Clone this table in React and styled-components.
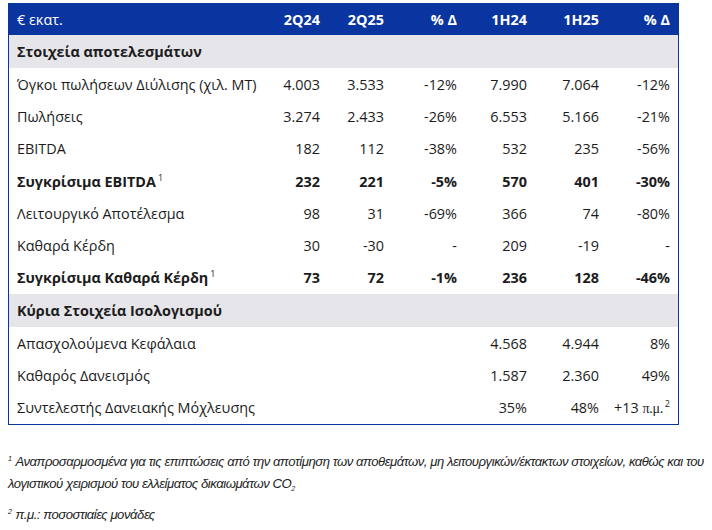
import React from 'react'
import styled, { createGlobalStyle } from 'styled-components'

const GlobalStyle = createGlobalStyle`
  body {
    margin: 0;
    background: #ffffff;
    font-family: "Open Sans", "Noto Sans", sans-serif;
    color: #1c1c1c;
  }
`

const header = ['€ εκατ.', '2Q24', '2Q25', '% Δ', '1H24', '1H25', '% Δ']

const rows = [
  { section: 'Στοιχεία αποτελεσμάτων' },
  { label: 'Όγκοι πωλήσεων Διύλισης (χιλ. ΜΤ)', values: ['4.003', '3.533', '-12%', '7.990', '7.064', '-12%'] },
  { label: 'Πωλήσεις', values: ['3.274', '2.433', '-26%', '6.553', '5.166', '-21%'] },
  { label: 'EBITDA', values: ['182', '112', '-38%', '532', '235', '-56%'] },
  { label: 'Συγκρίσιμα EBITDA', note: '1', bold: true, values: ['232', '221', '-5%', '570', '401', '-30%'] },
  { label: 'Λειτουργικό Αποτέλεσμα', values: ['98', '31', '-69%', '366', '74', '-80%'] },
  { label: 'Καθαρά Κέρδη', values: ['30', '-30', '-', '209', '-19', '-'] },
  { label: 'Συγκρίσιμα Καθαρά Κέρδη', note: '1', bold: true, values: ['73', '72', '-1%', '236', '128', '-46%'] },
  { section: 'Κύρια Στοιχεία Ισολογισμού' },
  { label: 'Απασχολούμενα Κεφάλαια', values: ['', '', '', '4.568', '4.944', '8%'] },
  { label: 'Καθαρός Δανεισμός', values: ['', '', '', '1.587', '2.360', '49%'] },
  { label: 'Συντελεστής Δανειακής Μόχλευσης', values: ['', '', '', '35%', '48%', 'pm'] },
]

function App() {
  return (
    <Page>
      <GlobalStyle />
      <Table>
        <HeadRow>
          {header.map((h, i) => (
            <HeadCell key={i} $left={i === 0}>{h}</HeadCell>
          ))}
        </HeadRow>
        {rows.map((r, i) =>
          r.section ? (
            <SectionRow key={i}>{r.section}</SectionRow>
          ) : (
            <Row key={i} $bold={r.bold}>
              <Label>
                {r.label}
                {r.note && <Sup>{r.note}</Sup>}
              </Label>
              {r.values.map((v, j) => (
                <Num key={j}>
                  {v === 'pm' ? (
                    <>
                      +13 <Unit>π.μ.</Unit>
                      <Sup>2</Sup>
                    </>
                  ) : (
                    v
                  )}
                </Num>
              ))}
            </Row>
          )
        )}
      </Table>
      <Notes>
        <Note>
          <NoteSup>1</NoteSup>Αναπροσαρμοσμένα για τις επιπτώσεις από την αποτίμηση των αποθεμάτων, μη λειτουργικών/έκτακτων στοιχείων, καθώς και του λογιστικού χειρισμού του ελλείματος δικαιωμάτων CO<Sub>2</Sub>
        </Note>
        <Note>
          <NoteSup>2</NoteSup>π.μ.: ποσοστιαίες μονάδες
        </Note>
      </Notes>
    </Page>
  )
}

export default App

const Page = styled.div`
  padding: 3px 0 0 8px;
  width: 700px;
`

const Table = styled.div`
  width: 671px;
  box-sizing: border-box;
  border: 1.5px solid #0a35a0;
`

const cols = `1fr 64px 64px 73px 70px 72px 71px`

const HeadRow = styled.div`
  display: grid;
  grid-template-columns: ${cols};
  height: 31px;
  align-items: center;
  background: #0a35a0;
  color: #ffffff;
  font-weight: 700;
  font-size: 14.4px;
`

const HeadCell = styled.div`
  text-align: ${(p) => (p.$left ? 'left' : 'right')};
  padding: ${(p) => (p.$left ? '0 0 0 8px' : '0 8px 0 0')};
  font-weight: ${(p) => (p.$left ? 400 : 700)};
`

const SectionRow = styled.div`
  height: 33px;
  display: flex;
  align-items: center;
  padding-left: 8px;
  background: #e6e6ea;
  font-weight: 700;
  font-size: 14.4px;
`

const Row = styled.div`
  display: grid;
  grid-template-columns: ${cols};
  height: 32.3px;
  align-items: center;
  font-size: 14.4px;
  font-weight: ${(p) => (p.$bold ? 700 : 400)};
`

const Label = styled.div`
  padding-left: 8px;
  white-space: nowrap;
`

const Num = styled.div`
  text-align: right;
  padding-right: 8px;
  white-space: nowrap;
`

const Sup = styled.sup`
  font-size: 9px;
  font-weight: 400;
  margin-left: 2px;
  vertical-align: 6px;
  line-height: 0;
`

const Unit = styled.span`
  font-family: "Liberation Serif", serif;
  font-size: 14px;
  letter-spacing: -0.3px;
`

const Notes = styled.div`
  padding-top: 26px;
  width: 700px;
  font-family: "Liberation Sans", sans-serif;
  font-style: italic;
  font-size: 13.1px;
  letter-spacing: -0.45px;
  color: #222222;
`

const Note = styled.p`
  margin: 0 0 9px;
  line-height: 22px;
`

const NoteSup = styled.span`
  display: inline-block;
  font-size: 7px;
  line-height: 8px;
  margin-right: 4px;
  transform: translateY(-5px);
`

const Sub = styled.span`
  display: inline-block;
  font-size: 7px;
  line-height: 8px;
  transform: translateY(3px);
`
